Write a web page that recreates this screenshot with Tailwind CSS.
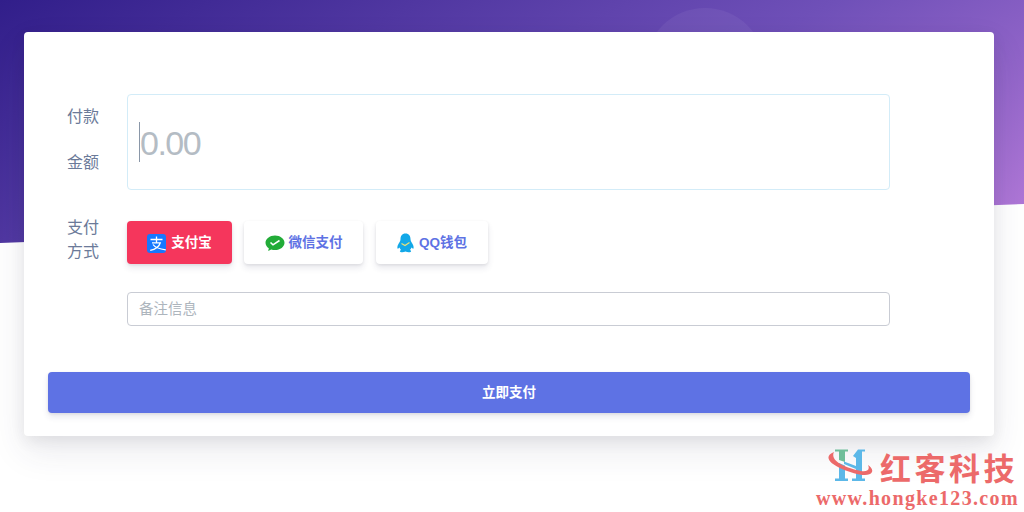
<!DOCTYPE html>
<html lang="zh">
<head>
<meta charset="utf-8">
<script src="https://cdn.jsdelivr.net/npm/@tailwindcss/browser@4"></script>
</head>
<body class="bg-white">
<div class="relative w-[1024px] h-[512px] overflow-hidden bg-white font-['Liberation_Sans','Noto_Sans_CJK_SC',sans-serif]">
  <div class="absolute inset-x-0 top-0 h-[244px] bg-linear-[150deg] from-[#311e8a] via-[#6f50b8] via-58% to-[#b67bda] [clip-path:polygon(0_0,100%_0,100%_204px,0_243px)]">
    <div class="absolute left-[645px] top-[8px] w-[120px] h-[120px] rounded-full bg-white/5"></div>
  </div>

  <main class="absolute left-[24px] top-[32px] w-[970px] h-[404px] bg-white rounded-[4px] shadow-[0_15px_35px_rgba(50,50,93,0.1),0_5px_15px_rgba(0,0,0,0.07)] px-[24px] pt-[62px] flex flex-col">
    <div class="flex">
      <div class="w-[79px] pl-[19px] h-[96px] flex flex-col gap-[22px] pt-[11px] text-[16px] leading-[24px] text-[#6b7a99]">
        <span>付款</span><span>金额</span>
      </div>
      <div class="w-[763px] h-[96px] border border-[#d3ecf8] rounded-[4px] flex items-center pl-[11px]">
        <div class="w-px h-[40px] bg-[#8a97a8]"></div>
        <span class="text-[34px] leading-none text-[#b4bcc4] tracking-[-1.5px] pt-[2px]">0.00</span>
      </div>
    </div>

    <div class="flex mt-[31px]">
      <div class="w-[79px] pl-[19px] -mt-[5px] text-[16px] leading-[23.5px] text-[#6b7a99]">支付<br>方式</div>
      <div class="flex h-[43px]">
        <button class="w-[105px] pt-[1px] rounded-[4px] bg-[#f5365c] text-white text-[13.5px] font-bold flex items-center justify-center gap-[5px] shadow-[0_4px_6px_rgba(50,50,93,0.11),0_1px_3px_rgba(0,0,0,0.08)]">
          <svg class="w-[19px] h-[19px]" viewBox="0 0 19 19"><rect width="19" height="19" rx="3" fill="#1678ff"/><path d="M3.500 5.500H15.500M9.500 2.500V8.500M5 8.800H13.300C12 13 8.500 15.500 3.200 16.300M6 10.500C8 13.500 12 15 18.800 15.800" fill="none" stroke="#fff" stroke-width="1.300"/></svg>
          支付宝
        </button>
        <button class="w-[119px] pt-[1px] ml-[12px] rounded-[4px] bg-white text-[#5e72e4] text-[13.5px] font-bold flex items-center justify-center gap-[4px] shadow-[0_4px_6px_rgba(50,50,93,0.11),0_1px_3px_rgba(0,0,0,0.08)]">
          <svg class="w-[20px] h-[18px]" viewBox="0 0 20 18"><path d="M10 1.500C4.800 1.500 .5 4.800 .5 8.800C.5 11 1.800 13 3.800 14.300L3.200 17L6.200 15.500C7.400 15.900 8.700 16.100 10 16.100C15.200 16.100 19.500 12.800 19.500 8.800S15.200 1.500 10 1.500Z" fill="#22ac38"/><path d="M5.500 8.500L8 10.800L14.500 6.500" fill="none" stroke="#fff" stroke-width="1.600"/></svg>
          微信支付
        </button>
        <button class="w-[112px] pt-[1px] ml-[13px] rounded-[4px] bg-white text-[#5e72e4] text-[13.5px] font-bold flex items-center justify-center gap-[5px] shadow-[0_4px_6px_rgba(50,50,93,0.11),0_1px_3px_rgba(0,0,0,0.08)]">
          <svg class="w-[17px] h-[20px]" viewBox="0 0 17 20"><path d="M8.500 .5C5 .5 3.500 3 3.500 6C3.500 7.500 3 8.500 2 10C.8 11.800 0 14 .5 15.500C1 16 2 15 2.500 14.500C2.800 15.500 3.300 16.300 4 17C2.800 17.500 2.500 18.500 3.500 19C5 19.700 7 19.300 8.500 18.500C10 19.300 12 19.700 13.500 19C14.500 18.500 14.200 17.500 13 17C13.700 16.300 14.200 15.500 14.500 14.500C15 15 16 16 16.500 15.500C17 14 16.200 11.800 15 10C14 8.500 13.500 7.500 13.500 6C13.500 3 12 .5 8.500 .5Z" fill="#12a8e8"/><path d="M4.500 10.500L8 12.500L12.500 9.500" fill="none" stroke="#e7e07a" stroke-width="1.300"/></svg>
          QQ钱包
        </button>
      </div>
    </div>

    <div class="pl-[79px] mt-[28px]">
      <div class="w-[763px] h-[34px] border border-[#c9ccd4] rounded-[4px] pl-[11px] pt-[2px] flex items-center text-[14.5px] text-[#adb5bd]">备注信息</div>
    </div>

    <button class="mt-[46px] w-full h-[41px] pt-[2px] pl-[-1px] rounded-[4px] bg-[#5e72e4] text-white text-[13.5px] font-bold shadow-[0_4px_6px_rgba(50,50,93,0.11),0_1px_3px_rgba(0,0,0,0.08)]">立即支付</button>
  </main>

  <div class="absolute left-[816px] top-[448px] w-[208px] font-['Liberation_Serif',serif] font-bold text-[#ec6a6a]">
    <div class="flex items-center h-[36px]">
      <svg class="w-[46px] h-[34px] ml-[11px] shrink-0" viewBox="0 0 46 34">
        <path d="M8 .5H21V2.500H18V13L12 11V2.500H8Z" fill="#6fbe9a"/>
        <path d="M12 14L18 16.500V29.500H21V32H8V29.500H12Z" fill="#5cb8e8"/>
        <path d="M26 7L31 .5H38V2.500H35V29.500H38V32H25V29.500H29V20L17 15V12.500L29 17V9Z" fill="#5cb8e8"/>
        <path d="M7 3C-3 7 1 14 15 20C27 25 42 29 45 23C46 21 44 18 41 16C43 20 41 23 34 22C22 20 2 13 7 3Z" fill="#ec6a6a"/>
      </svg>
      <span class="ml-[7px] text-[31px] leading-none tracking-[3.500px] whitespace-nowrap font-['Noto_Sans_CJK_SC',sans-serif]">红客科技</span>
    </div>
    <div class="text-[20px] leading-[20px] mt-[4px] whitespace-nowrap tracking-[1.350px]">www.hongke123.com</div>
  </div>
</div>
</body>
</html>
